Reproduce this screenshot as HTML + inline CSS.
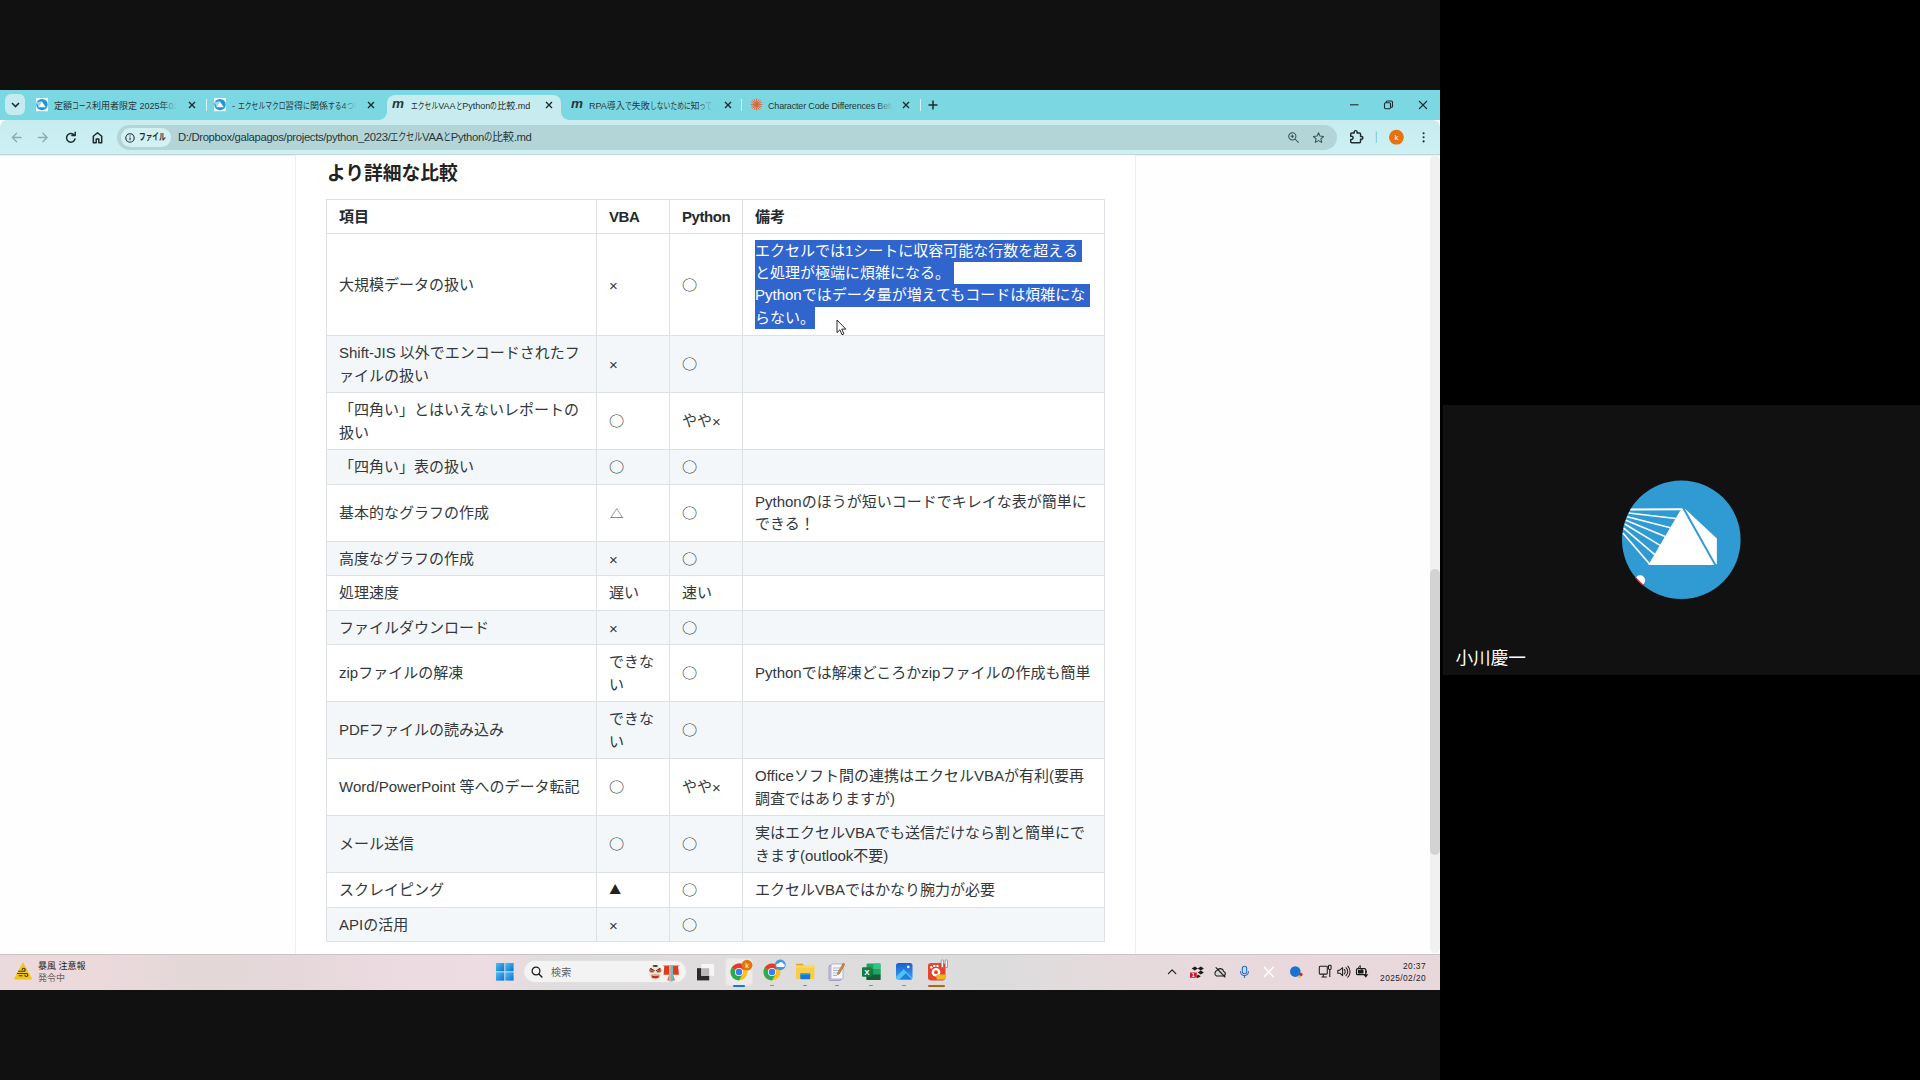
<!DOCTYPE html>
<html lang="ja">
<head>
<meta charset="utf-8">
<title>エクセルVAAとPythonの比較.md</title>
<style>
*{box-sizing:border-box;margin:0;padding:0}
html,body{width:1920px;height:1080px;overflow:hidden;background:#000}
body{position:relative;font-family:"Liberation Sans","Noto Sans CJK JP",sans-serif;color:#222}
#tile{position:absolute;left:0;top:0;width:1440px;height:1080px;background:#111}
#share{position:absolute;left:0;top:90px;width:1440px;height:900px;background:#fff;overflow:hidden}
#tabbar{position:absolute;left:0;top:0;width:1440px;height:30px;background:#7bd8e2}
#toolbar{position:absolute;left:0;top:30px;width:1440px;height:35px;background:linear-gradient(#c7ecf0,#cdf0f3);border-bottom:1px solid #bfd8db;border-radius:7px 7px 0 0}
#page{position:absolute;left:0;top:65px;width:1440px;height:800px;background:#fefefe;box-shadow:inset 0 1px 0 #e3f2f4}
#taskbar{position:absolute;left:0;top:864px;width:1440px;height:36px;background:linear-gradient(90deg,#ebdadd 0%,#ebd9dc 7%,#e3d7d8 14%,#e6d8da 21%,#eddbe2 28%,#eddce2 34%,#dfdddd 38%,#dddcdc 70%,#e6dadc 78%,#e8d9dd 86%,#e8d8dc 100%);box-shadow:inset 0 1px 0 #c9c4c5}
#side{position:absolute;left:1443px;top:405px;width:477px;height:270px;background:#111}
.k{display:inline-block;transform-origin:0 50%;white-space:nowrap}
.ti{position:absolute}
.tt{position:absolute;top:9px;height:14px;line-height:14px;font-size:9px;color:#26373a;white-space:nowrap;overflow:hidden}
.tt::after{content:"";position:absolute;right:0;top:0;width:16px;height:14px;background:linear-gradient(90deg,rgba(123,216,226,0),#7bd8e2)}
.tt.a::after{background:none}
.tx{position:absolute;top:11px;width:8px;height:8px}
.sep{position:absolute;top:9px;width:1px;height:12px;background:#d6f3f6}
#atab{position:absolute;left:387px;top:4.6px;width:174px;height:25.4px;background:#c6ecf0;border-radius:8px 8px 0 0}
#atab:before,#atab:after{content:"";position:absolute;bottom:0;width:8px;height:8px}
#atab:before{left:-8px;background:radial-gradient(circle at 0 0,rgba(0,0,0,0) 7.5px,#c6ecf0 8px)}
#atab:after{right:-8px;background:radial-gradient(circle at 100% 0,rgba(0,0,0,0) 7.5px,#c6ecf0 8px)}
#chev{position:absolute;left:5px;top:4px;width:20px;height:21px;border-radius:6px;background:#c3ebf0}
.fav{position:absolute;top:8px;width:13px;height:13px}
.mfav{position:absolute;top:5px;font-family:"Liberation Sans",sans-serif;font-weight:700;font-style:italic;font-size:13.5px;line-height:18px;color:#27363a;letter-spacing:-1px}
#omni{position:absolute;left:117px;top:4.5px;width:1220px;height:25.5px;border-radius:13px;background:#b4d5d8}
#chip{position:absolute;left:3.5px;top:3.5px;width:50px;height:18.5px;border-radius:9.5px;background:#d3f0f3}
#chip span.l{position:absolute;left:18px;top:0;font-size:9.5px;line-height:18.5px;font-weight:700;color:#1d2c2f;white-space:nowrap}
#url{position:absolute;left:61px;top:0;font-size:11.3px;line-height:25.5px;color:#24383b;white-space:nowrap;letter-spacing:-0.34px}
#content{position:absolute;left:295px;top:0;width:841px;height:800px;background:#fff;border-left:1px solid #eceeef;border-right:1px solid #eceeef}
#h2{position:absolute;left:327px;top:5px;font-size:18.75px;font-weight:700;line-height:28px;color:#222;white-space:nowrap}
table{position:absolute;left:326px;top:44px;width:778px;border-collapse:collapse;table-layout:fixed;font-size:15px;line-height:22.4px;color:#33383c}
td,th{border:1px solid #dde0e4;padding:1px 12px 0;text-align:left;vertical-align:middle;font-weight:400;white-space:nowrap}
th{font-weight:700;color:#24292e}
th.l{letter-spacing:-0.45px}
tr.s td{background:#f4f7f9}
.sel{background:#3065cd;color:#fff;display:block;position:relative;top:-0.7px;height:22.4px;white-space:nowrap}
.sym{font-family:"Noto Sans CJK JP",sans-serif;font-size:15.2px;line-height:15px;position:relative;top:1.2px;left:0px;color:#333;display:inline-block;transform:scaleY(.89)}
.sym.t{font-size:13.4px;top:0.5px;left:1px;transform:scaleY(.85)}
.sym.b{font-size:11.8px;top:0.3px;left:0.3px;color:#222;transform:scaleY(1.04)}
.x{position:relative;top:1px}
#sb{position:absolute;left:1430px;top:0;width:10px;height:798px;background:#f1f1f1;border-radius:5px}
#sbt{position:absolute;left:1430px;top:414px;width:10px;height:286px;background:#d3d3d3;border-radius:5px}
#taskbar{font-family:"Liberation Sans","Noto Sans CJK JP",sans-serif}
#wx1{position:absolute;left:38px;top:6.5px;font-size:9px;line-height:11px;color:#1c1c1c;white-space:nowrap;font-weight:400}
#wx2{position:absolute;left:38px;top:19px;font-size:9px;line-height:11px;color:#6a6466;white-space:nowrap}
#search{position:absolute;left:522.8px;top:6px;width:164.7px;height:23px;border-radius:11.5px;background:#f4f3f3;border:0.5px solid #e2dfdf}
#search span{position:absolute;left:27.2px;top:0.5px;font-size:10px;line-height:21.5px;color:#5f5f5f;letter-spacing:0.3px}
#tbact{position:absolute;left:725px;top:3.5px;width:28px;height:28px;border-radius:4px;background:#ececec;border:0.5px solid #e3e3e3}
.ind{position:absolute;top:30.5px;height:1.6px;width:4px;border-radius:1px;background:#8d8b8b}
#clk{position:absolute;right:14px;top:6px;text-align:right;font-size:8.4px;line-height:12.2px;color:#1c1c1c;white-space:nowrap;letter-spacing:0.4px}
#side{font-family:"Liberation Sans","Noto Sans CJK JP",sans-serif}
#nm{position:absolute;left:12.5px;top:241px;font-size:17.6px;line-height:24px;color:#fff;white-space:nowrap;font-weight:400}
</style>
</head>
<body>
<div id="tile"><div id="share">
<div id="tabbar">
<div id="chev"><svg style="position:absolute;left:6px;top:8px" width="9" height="6" viewBox="0 0 9 6"><path d="M1 1L4.5 4.5L8 1" stroke="#1d2c2f" stroke-width="1.6" fill="none"/></svg></div>
<svg class="fav" style="left:36px;width:12px;height:13.2px;top:8.4px" viewBox="0 0 12 13.2"><rect width="12" height="13.2" fill="#effbfd"/><circle cx="6" cy="6.600" r="5.700" fill="#1f95d6"/><path d="M.6 4.300L5.600 3.300 2.600 9.200z" fill="#9fd4f0"/><path d="M5.800 3.200L2.500 9.200h7.300z" fill="#f4fcff"/></svg><div class="tt" style="left:54px;width:123px">定額<span class="k" style="transform:scaleX(0.755);margin-right:-6.62px">コース</span>利用者限定 2025年02月</div><svg class="tx" style="left:188px" viewBox="0 0 8 8"><path d="M1 1L7 7M7 1L1 7" stroke="#1d2c2f" stroke-width="1.4" fill="none"/></svg><div class="sep" style="left:206px"></div>
<svg class="fav" style="left:214px;width:12px;height:13.2px;top:8.4px" viewBox="0 0 12 13.2"><rect width="12" height="13.2" fill="#effbfd"/><circle cx="6" cy="6.600" r="5.700" fill="#1f95d6"/><path d="M.6 4.300L5.600 3.300 2.600 9.200z" fill="#9fd4f0"/><path d="M5.800 3.200L2.500 9.200h7.300z" fill="#f4fcff"/></svg><div class="tt" style="left:232px;width:125px">- <span class="k" style="transform:scaleX(0.755);margin-right:-15.44px">エクセルマクロ</span>習得<span class="k" style="transform:scaleX(0.755);margin-right:-2.21px">に</span>関係<span class="k" style="transform:scaleX(0.755);margin-right:-4.41px">する</span>4<span class="k" style="transform:scaleX(0.755);margin-right:-8.82px">つのこと</span></div><svg class="tx" style="left:366.5px" viewBox="0 0 8 8"><path d="M1 1L7 7M7 1L1 7" stroke="#1d2c2f" stroke-width="1.4" fill="none"/></svg>
<div id="atab"></div><div class="mfav" style="left:392px">m</div><div class="tt a" style="left:411px;width:125px;color:#1d2c2f"><span class="k" style="transform:scaleX(0.755);margin-right:-8.82px">エクセル</span>VAA<span class="k" style="transform:scaleX(0.755);margin-right:-2.21px">と</span>Python<span class="k" style="transform:scaleX(0.755);margin-right:-2.21px">の</span>比較.md</div><svg class="tx" style="left:544.5px" viewBox="0 0 8 8"><path d="M1 1L7 7M7 1L1 7" stroke="#1d2c2f" stroke-width="1.4" fill="none"/></svg>
<div class="mfav" style="left:571px">m</div><div class="tt" style="left:589px;width:125px">RPA導入<span class="k" style="transform:scaleX(0.755);margin-right:-2.21px">で</span>失敗<span class="k" style="transform:scaleX(0.755);margin-right:-13.23px">しないために</span>知<span class="k" style="transform:scaleX(0.755);margin-right:-8.82px">っておき</span></div><svg class="tx" style="left:723.5px" viewBox="0 0 8 8"><path d="M1 1L7 7M7 1L1 7" stroke="#1d2c2f" stroke-width="1.4" fill="none"/></svg><div class="sep" style="left:741px"></div>
<svg class="fav" style="left:749.5px" viewBox="0 0 13 13"><g stroke="#d9653b" stroke-width="0.9" stroke-linecap="round"><path d="M6.5 1v11M1 6.500h11M2.600 2.600l7.800 7.800M10.400 2.600l-7.800 7.800M4.300 1.600l4.400 9.800M8.700 1.600L4.300 11.400M1.600 4.300l9.800 4.400M1.600 8.700l9.800-4.400"/></g></svg>
<div class="tt" style="left:768px;width:125px;letter-spacing:-0.17px">Character Code Differences Between</div><svg class="tx" style="left:902px" viewBox="0 0 8 8"><path d="M1 1L7 7M7 1L1 7" stroke="#1d2c2f" stroke-width="1.4" fill="none"/></svg><div class="sep" style="left:920px"></div>
<svg class="ti" style="left:928px;top:10px" width="10" height="10" viewBox="0 0 10 10"><path d="M5 .5v9M.5 5h9" stroke="#1d2c2f" stroke-width="1.5"/></svg>
<svg class="ti" style="left:1349px;top:9px" width="80" height="12" viewBox="0 0 80 12"><g stroke="#1d2c2f" stroke-width="1.1" fill="none"><path d="M1 5.800h8.500"/><rect x="35.500" y="3.800" width="6" height="6" rx="1.200"/><path d="M37.300 3.800V3a1 1 0 0 1 1-1h4a1.200 1.200 0 0 1 1.200 1.200v4a1 1 0 0 1-1 1h-.8"/><path d="M70 2l8 8M78 2l-8 8"/></g></svg>
</div>
<div id="toolbar">
<svg class="ti" style="left:11px;top:11px" width="96" height="13" viewBox="0 0 96 13">
<g fill="none" stroke-width="1.35" stroke-linecap="round" stroke-linejoin="round">
<path d="M10 6.500H1.600M5.600 2.200L1.400 6.500l4.200 4.300" stroke="#86aeb4"/>
<path d="M27.500 6.500h8.400M31.900 2.200l4.200 4.300-4.200 4.300" stroke="#86aeb4"/>
<path d="M63.300 4.300A4.300 4.300 0 1 0 64 8" stroke="#1d2c2f" stroke-width="1.5"/><path d="M64.200 1.300v3.300h-3.300" stroke="#1d2c2f" stroke-width="1.5"/>
<path d="M82.300 11.700V5.300l4.200-3.600 4.200 3.600v6.400h-2.900V8h-2.600v3.700z" stroke="#1d2c2f" stroke-width="1.5"/>
</g></svg>
<div id="omni"><div id="chip"><svg style="position:absolute;left:4.5px;top:4.5px" width="10" height="10" viewBox="0 0 10 10"><circle cx="5" cy="5" r="4.200" fill="none" stroke="#1d2c2f" stroke-width="1.100"/><path d="M5 4.400v2.800M5 2.600v1" stroke="#1d2c2f" stroke-width="1.100"/></svg><span class="l"><span class="k" style="transform:scaleX(0.7);margin-right:-11.40px">ファイル</span></span></div>
<div id="url">D:/Dropbox/galapagos/projects/python_2023/<span class="k" style="transform:scaleX(0.73);margin-right:-12.20px">エクセル</span>VAA<span class="k" style="transform:scaleX(0.73);margin-right:-3.05px">と</span>Python<span class="k" style="transform:scaleX(0.73);margin-right:-3.05px">の</span>比較.md</div>
<svg style="position:absolute;left:1170px;top:6px" width="40" height="14" viewBox="0 0 40 14"><g fill="none" stroke="#3c5256" stroke-width="1.050"><circle cx="5.300" cy="5.300" r="3.600"/><path d="M8 8l3.600 3.600M3.600 5.300h3.400M5.300 3.600v3.400"/><path d="M31.500 1.800l1.500 3.300 3.600.4-2.700 2.400.8 3.500-3.200-1.800-3.200 1.800.8-3.500-2.700-2.400 3.600-.4z" stroke-linejoin="round"/></g></svg>
</div>
<svg class="ti" style="left:1349px;top:9px" width="84" height="16" viewBox="0 0 84 16"><path transform="translate(0.540,1.020) scale(0.580)" d="M20.500 11H19V7c0-1.100-.9-2-2-2h-4V3.500C13 2.120 11.880 1 10.500 1S8 2.120 8 3.500V5H4c-1.100 0-1.990.9-1.990 2v3.800H3.500c1.490 0 2.700 1.210 2.700 2.700s-1.210 2.700-2.700 2.700H2V20c0 1.100.9 2 2 2H17c1.100 0 2-.9 2-2v-4h1.500c1.380 0 2.500-1.120 2.500-2.500S21.880 11 20.500 11z" fill="none" stroke="#1d2c2f" stroke-width="2.500" stroke-linejoin="round"/><rect x="26.800" y="2.400" width="1" height="11.500" fill="#74cddb"/><circle cx="47.400" cy="8.200" r="7.400" fill="#e8710a"/><circle cx="74.600" cy="4.300" r="1.050" fill="#1d2c2f"/><circle cx="74.600" cy="8.300" r="1.050" fill="#1d2c2f"/><circle cx="74.600" cy="12.400" r="1.050" fill="#1d2c2f"/><text x="47.400" y="11" font-size="8" font-family="Liberation Sans,sans-serif" fill="#fff" text-anchor="middle">k</text></svg>
</div>
<div id="page"><div id="content"></div><div id="h2">より詳細な比較</div>
<table><colgroup><col style="width:270px"><col style="width:73px"><col style="width:73px"><col style="width:362px"></colgroup>
<tr style="height:34px"><th>項目</th><th class="l">VBA</th><th class="l">Python</th><th>備考</th></tr>
<tr class="" style="height:102px"><td>大規模データの扱い</td><td><span class="x">×</span></td><td><span class="sym">○</span></td><td><span class="sel" style="width:326.6px">エクセルでは1シートに収容可能な行数を超える</span><span class="sel" style="width:199px">と処理が極端に煩雑になる。</span><span class="sel" style="width:335.3px">Pythonではデータ量が増えてもコードは煩雑にな</span><span class="sel" style="width:59.5px">らない。</span></td></tr>
<tr class="s" style="height:57px"><td>Shift-JIS 以外でエンコードされたフ<br>ァイルの扱い</td><td><span class="x">×</span></td><td><span class="sym">○</span></td><td></td></tr>
<tr class="" style="height:57px"><td>「四角い」とはいえないレポートの<br>扱い</td><td><span class="sym">○</span></td><td>やや<span class="x">×</span></td><td></td></tr>
<tr class="s" style="height:35px"><td>「四角い」表の扱い</td><td><span class="sym">○</span></td><td><span class="sym">○</span></td><td></td></tr>
<tr class="" style="height:56.5px"><td>基本的なグラフの作成</td><td><span class="sym t">△</span></td><td><span class="sym">○</span></td><td>Pythonのほうが短いコードでキレイな表が簡単に<br>できる！</td></tr>
<tr class="s" style="height:34.5px"><td>高度なグラフの作成</td><td><span class="x">×</span></td><td><span class="sym">○</span></td><td></td></tr>
<tr class="" style="height:34.5px"><td>処理速度</td><td>遅い</td><td>速い</td><td></td></tr>
<tr class="s" style="height:34.5px"><td>ファイルダウンロード</td><td><span class="x">×</span></td><td><span class="sym">○</span></td><td></td></tr>
<tr class="" style="height:57px"><td>zipファイルの解凍</td><td>できな<br>い</td><td><span class="sym">○</span></td><td>Pythonでは解凍どころかzipファイルの作成も簡単</td></tr>
<tr class="s" style="height:57px"><td>PDFファイルの読み込み</td><td>できな<br>い</td><td><span class="sym">○</span></td><td></td></tr>
<tr class="" style="height:57px"><td>Word/PowerPoint 等へのデータ転記</td><td><span class="sym">○</span></td><td>やや<span class="x">×</span></td><td>Officeソフト間の連携はエクセルVBAが有利(要再<br>調査ではありますが)</td></tr>
<tr class="s" style="height:57px"><td>メール送信</td><td><span class="sym">○</span></td><td><span class="sym">○</span></td><td>実はエクセルVBAでも送信だけなら割と簡単にで<br>きます(outlook不要)</td></tr>
<tr class="" style="height:34.5px"><td>スクレイピング</td><td><span class="sym b">▲</span></td><td><span class="sym">○</span></td><td>エクセルVBAではかなり腕力が必要</td></tr>
<tr class="s" style="height:34.5px"><td>APIの活用</td><td><span class="x">×</span></td><td><span class="sym">○</span></td><td></td></tr>
</table>
<svg class="ti" style="left:835.5px;top:164.4px" width="12" height="18" viewBox="0 0 12 18"><path d="M1 1v12.600l2.900-2.800 2.100 4.900 1.900-.8-2.100-4.800h4z" fill="#fff" stroke="#111" stroke-width="0.9" stroke-linejoin="round"/></svg><div id="sb"></div><div id="sbt"></div></div>
<div id="taskbar">
<svg class="ti" style="left:13px;top:7px" width="20" height="19" viewBox="0 0 20 19"><path d="M10 1.200L18.800 17.300a.8.800 0 0 1-.7 1.200H1.900a.8.800 0 0 1-.7-1.200z" fill="#f0c419"/><g fill="none" stroke="#4a3b0a" stroke-width="1.100" stroke-linecap="round"><path d="M5.500 10.200h5.200a1.500 1.500 0 1 0-1.500-1.500"/><path d="M4.500 12.500h8.800a1.500 1.500 0 1 1-1.500 1.500"/><path d="M6.200 14.800h3"/></g></svg>
<div id="wx1">暴風 注意報</div><div id="wx2">発令中</div>
<svg class="ti" style="left:495.5px;top:9px" width="18" height="18" viewBox="0 0 18 18"><defs><linearGradient id="wg" x1="0" y1="0" x2="1" y2="1"><stop offset="0" stop-color="#4cc2f4"/><stop offset="1" stop-color="#0a6fd0"/></linearGradient></defs><g fill="url(#wg)"><rect x="0" y="0" width="8.300" height="8.300"/><rect x="9.300" y="0" width="8.300" height="8.300"/><rect x="0" y="9.300" width="8.300" height="8.300"/><rect x="9.300" y="9.300" width="8.300" height="8.300"/></g></svg>
<div id="search"><svg style="position:absolute;left:7.700px;top:5px" width="12" height="12" viewBox="0 0 12 12"><circle cx="5" cy="5" r="3.900" fill="none" stroke="#1b1b1b" stroke-width="1.250"/><path d="M7.900 7.900l3 3" stroke="#1b1b1b" stroke-width="1.400" stroke-linecap="round"/></svg><span>検索</span>
<svg style="position:absolute;left:123.7px;top:3px" width="36" height="19" viewBox="0 0 36 19"><ellipse cx="8.300" cy="8.700" rx="6.200" ry="7.600" fill="#ece6cd"/><ellipse cx="8.300" cy="2" rx="2.700" ry=".9" fill="#3b3a2a"/><ellipse cx="3.900" cy="6.300" rx="1.700" ry="2.100" fill="#c23a30" opacity=".8"/><ellipse cx="12.700" cy="6.300" rx="1.700" ry="2.100" fill="#c23a30" opacity=".8"/><path d="M3.800 4.600l3.400 2M12.800 4.600l-3.400 2" stroke="#3a2a22" stroke-width="1.100" stroke-linecap="round"/><path d="M4.300 7.800h2.400M9.900 7.800h2.400" stroke="#2e2420" stroke-width=".9"/><path d="M3.700 10.700q4.600-1.600 9.200 0l-.6 3.200q-4 1.500-8 0z" fill="#e8a79a"/><path d="M4.700 11.600q3.600 1.200 7.200 0l-.5 2q-3.100 1.200-6.200 0z" fill="#b3261c"/>
<rect x="16" y="1.200" width="16.600" height=".9" fill="#b8a470"/><path d="M17.300 2.100h4.900v8.600h-5.600z" fill="#e03a1d"/><path d="M26 2.100h5.100l.8 8.600H26z" fill="#e03a1d"/><path d="M22.200 10.400L20.100 16.400h2.400zM26 10.400l2.100 6h-2.400z" fill="#e66a4a"/><rect x="22.100" y="1.600" width="1.800" height="15.900" fill="#c4a9a3"/><rect x="23.900" y="1.600" width="2.200" height="15.900" fill="#6cbfc0"/></svg></div>
<svg class="ti" style="left:697px;top:9.500px" width="18" height="17" viewBox="0 0 18 17"><rect x="0" y="4.200" width="12.200" height="12.200" fill="#2b2b2b"/><rect x="4.300" y="0" width="12.800" height="11.800" fill="#f6f6f6"/><rect x="4.300" y="4.200" width="7.900" height="7.600" fill="#b9b9b9"/></svg>
<div id="tbact"></div>
<svg class="ti" style="left:729.500px;top:4.500px" width="26" height="27" viewBox="0 0 26 27"><g transform="translate(0.500,4.500)"><circle cx="8.500" cy="8.500" r="8.500" fill="#fbc116"/><path d="M8.500 8.500L1.140 4.250A8.500 8.500 0 0 1 15.860 4.250z" fill="#e33b2e"/><path d="M8.500 0A8.500 8.500 0 0 1 15.860 4.250H8.500z" fill="#e33b2e"/><path d="M1.140 4.250A8.500 8.500 0 0 0 8.500 17L12.200 10.600 8.500 8.500z" fill="#2da94f"/><path d="M1.140 4.250L4.820 10.620 8.500 8.500z" fill="#2da94f"/><circle cx="8.500" cy="8.500" r="4.100" fill="#fff"/><circle cx="8.500" cy="8.500" r="3.250" fill="#3b7ded"/></g><circle cx="17" cy="6.200" r="5.400" fill="#e8710a"/><text x="17" y="8.800" font-size="7.500" font-family="Liberation Sans,sans-serif" fill="#fff" text-anchor="middle">k</text></svg>
<svg class="ti" style="left:762.500px;top:4.500px" width="26" height="27" viewBox="0 0 26 27"><g transform="translate(0.500,4.500)"><circle cx="8.500" cy="8.500" r="8.500" fill="#fbc116"/><path d="M8.500 8.500L1.140 4.250A8.500 8.500 0 0 1 15.860 4.250z" fill="#e33b2e"/><path d="M1.140 4.250A8.500 8.500 0 0 0 8.500 17L12.200 10.600 8.500 8.500z" fill="#2da94f"/><path d="M1.140 4.250L4.820 10.620 8.500 8.500z" fill="#2da94f"/><circle cx="8.500" cy="8.500" r="4.100" fill="#fff"/><circle cx="8.500" cy="8.500" r="3.250" fill="#3b7ded"/></g><circle cx="17.300" cy="5.800" r="5.400" fill="#3a9be0"/><path d="M14.300 7.900h5.900a1.500 1.500 0 0 0 .2-3 2.500 2.500 0 0 0-4.700-.3 1.700 1.700 0 0 0-1.400 3.300z" fill="#fff"/></svg>
<svg class="ti" style="left:795.500px;top:9px" width="19" height="17" viewBox="0 0 19 17"><path d="M0 1.800a1 1 0 0 1 1-1h5.500l1.800 2H0z" fill="#e0a526"/><rect x="0" y="2.600" width="18.500" height="13.600" rx="1" fill="#f9cd45"/><rect x="0" y="2.600" width="18.500" height="2" fill="#fbd766"/><rect x="4.300" y="10.500" width="9.900" height="5.700" rx=".8" fill="#1877cf"/><rect x="4.300" y="10.500" width="9.900" height="1.600" fill="#2f97ea"/></svg>
<svg class="ti" style="left:828px;top:7.500px" width="18" height="20" viewBox="0 0 18 20"><rect x="1" y="3.500" width="12" height="15" rx="1" fill="#c9c6e6" stroke="#8d89b8" stroke-width=".7"/><rect x="3" y="2" width="12" height="15" rx="1" fill="#f7f7fb" stroke="#9d9ac4" stroke-width=".7"/><path d="M5 6h7M5 8.500h7M5 11h5M5 13.500h4" stroke="#a9a9b8" stroke-width=".9"/><path d="M15.200 1.200l1.600 1-5.200 9.300-2 1.300.3-2.400z" fill="#d9902f" stroke="#7a4a18" stroke-width=".5"/></svg>
<svg class="ti" style="left:861.500px;top:8.500px" width="19" height="18" viewBox="0 0 19 18"><rect x="4.500" y="0.500" width="14" height="16.500" rx="1.200" fill="#21a366"/><rect x="11.500" y="0.500" width="7" height="5.500" fill="#33c481"/><rect x="4.500" y="6" width="7" height="5.500" fill="#107c41"/><rect x="11.500" y="6" width="7" height="5.500" fill="#21a366"/><rect x="4.500" y="11.500" width="14" height="5.500" fill="#185c37"/><rect x="0" y="4.200" width="9.600" height="9.600" rx="1" fill="#107c41"/><text x="4.800" y="12" font-size="8" font-weight="700" font-family="Liberation Sans,sans-serif" fill="#fff" text-anchor="middle">X</text></svg>
<svg class="ti" style="left:895.500px;top:9px" width="17" height="17" viewBox="0 0 17 17"><defs><linearGradient id="pg" x1="0" y1="0" x2="0" y2="1"><stop offset="0" stop-color="#1b5fd0"/><stop offset="1" stop-color="#3aa0ee"/></linearGradient></defs><rect width="16.500" height="16.500" rx="2.600" fill="url(#pg)"/><path d="M0 14L7.600 6.200 16.500 15v-1.100A2.600 2.600 0 0 1 13.900 16.500H2.600A2.600 2.600 0 0 1 0 14z" fill="#4cc3f7"/><path d="M3.500 16.500L9.800 10.200 16 16.500z" fill="#1f7fe0"/><circle cx="12.300" cy="3.900" r="1.300" fill="#fff"/></svg>
<svg class="ti" style="left:928px;top:5px" width="22" height="23" viewBox="0 0 22 23"><rect x="0" y="4" width="17.500" height="17.500" rx="3.200" fill="#e4452d"/><circle cx="8" cy="13.200" r="4.300" fill="#fff"/><circle cx="8" cy="13.200" r="1.900" fill="#e4452d"/><circle cx="3.300" cy="8.200" r="1.200" fill="#fff"/><circle cx="6.300" cy="6.900" r="1.200" fill="#fff"/><circle cx="9.500" cy="6.900" r="1.200" fill="#fff"/><rect x="8.500" y="15.500" width="9" height="5" rx=".8" fill="#f3b51c"/><rect x="13.200" y="1" width="2.300" height="7.500" rx=".5" fill="#f6f6f6" stroke="#555" stroke-width=".5"/><rect x="17.200" y="1" width="2.300" height="7.500" rx=".5" fill="#f6f6f6" stroke="#555" stroke-width=".5"/></svg>
<div class="ind" style="left:733px;width:11.500px;background:#1a73d9;height:2px"></div>
<div class="ind" style="left:769.600px"></div><div class="ind" style="left:802.700px"></div><div class="ind" style="left:835.400px"></div><div class="ind" style="left:868.600px"></div><div class="ind" style="left:901.700px"></div>
<div class="ind" style="left:928px;width:16.500px;background:#b2660e;height:2px"></div>
<svg class="ti" style="left:1166px;top:10px" width="206" height="16" viewBox="0 0 206 16">
<path d="M2.400 9.600L6.100 5.800l3.700 3.800" fill="none" stroke="#1c1c1c" stroke-width="1.150" stroke-linecap="round" stroke-linejoin="round"/>
<g fill="#1c1c1c"><path d="M28.800 2.600l3.100 1.900-3.100 1.900-3.100-1.900zM34.800 2.600l3.100 1.900-3.100 1.900-3.100-1.900zM34.800 6.600l3.100 1.900-3.100 1.900-3.100-1.900zM31.800 10.500l3 1.700-3 1.800-1.300-.9z"/></g><rect x="24" y="8.400" width="6.800" height="5.400" rx=".6" fill="#d8122b"/><text x="27.400" y="13.200" font-size="5.500" font-weight="700" font-family="Liberation Sans,sans-serif" fill="#fff" text-anchor="middle">1</text>
<g fill="none" stroke="#1c1c1c" stroke-width="1.100" stroke-linejoin="round"><path d="M50.500 12h6.800a2.300 2.300 0 0 0 .4-4.500 3.600 3.600 0 0 0-6.700-1 3 3 0 0 0-.5 5.500z" fill="#d8d4d4"/><path d="M50 3.700l9 9.300" stroke-linecap="round"/></g>
<g fill="none" stroke="#2a6fcf" stroke-width="1.100" stroke-linecap="round"><rect x="76.300" y="2.200" width="4.400" height="7.600" rx="2.200" fill="#c7dcf3"/><path d="M74.500 7.600a4 4 0 0 0 8 0M78.500 11.600v1.900"/></g>
<path d="M98.500 3.400l8.600 9M107.100 3.400l-8.600 9" stroke="#fff" stroke-width="1.500" stroke-linecap="round"/>
<circle cx="129.300" cy="7.600" r="5.300" fill="#1a73d0"/><circle cx="134.800" cy="10.600" r="1.800" fill="#d42a22"/><rect x="132.200" y="11.600" width="2.300" height="2.300" fill="#edc23a"/>
<g fill="none" stroke="#1c1c1c" stroke-width="1.050" stroke-linejoin="round"><rect x="153.300" y="2.300" width="8" height="7.800" rx=".8"/><path d="M155.500 13h5.300M157.300 10.300V13M163.800 13V5.800"/><rect x="162.500" y="1.200" width="2.600" height="4.200" rx=".9"/>
<path d="M171.800 6.200h2l2.800-2.500v8l-2.800-2.500h-2z"/><path d="M178.300 5.500a3 3 0 0 1 0 4.400M180 3.700a5.500 5.500 0 0 1 0 8M181.800 2.200a7.800 7.800 0 0 1 0 11" stroke-linecap="round"/>
<rect x="190.500" y="4.700" width="9.300" height="6" rx="1.300" stroke-width="1.250"/><path d="M200.300 6.700v2" stroke-width="1.300"/><path d="M192.300 3.300l2-1.800v3.400zM193.300 9.300l3.300-3.100h-1.200l.8-1.300" stroke-width=".9"/></g><path d="M197.300 10.300h5l-2.500 3.400z" fill="#1c1c1c"/><rect x="192" y="6" width="5.500" height="3.500" fill="#1c1c1c"/>
</svg>
<div id="clk">20:37<br>2025/02/20</div>
</div>
</div></div>
<div id="side">
<svg class="ti" style="left:173px;top:70px" width="130" height="130" viewBox="0 0 130 130">
<defs><clipPath id="dot"><circle cx="24.07" cy="105.32" r="6"/></clipPath><clipPath id="av"><circle cx="65.30" cy="64.76" r="59.30"/></clipPath></defs>
<circle cx="65.30" cy="64.76" r="59.30" fill="#309bd2"/>
<g clip-path="url(#av)">
<g stroke="#fff" stroke-linecap="butt"><line x1="14.20" y1="34.55" x2="65.60" y2="34.19" stroke-width="2.05"/><line x1="12.52" y1="38.04" x2="59.82" y2="43.45" stroke-width="1.56"/><line x1="11.19" y1="41.65" x2="54.41" y2="52.72" stroke-width="1.56"/><line x1="9.75" y1="45.26" x2="49.23" y2="61.51" stroke-width="1.56"/><line x1="8.79" y1="48.99" x2="44.06" y2="70.42" stroke-width="1.56"/><line x1="7.70" y1="53.08" x2="38.76" y2="79.69" stroke-width="1.56"/><line x1="6.86" y1="58.02" x2="33.58" y2="89.07" stroke-width="1.69"/></g>
<polygon points="65.96,32.74 32.26,89.92 98.22,89.92" fill="#fff"/>
<polygon points="68.73,33.58 100.87,63.44 100.87,89.31 100.03,89.31" fill="#fff"/>
<circle cx="24.07" cy="105.32" r="5.06" fill="#fff"/>
</g>
<g clip-path="url(#dot)"><circle cx="65.30" cy="64.76" r="59.30" fill="none" stroke="#c83232" stroke-width="1.3"/></g>
</svg>
<div id="nm">小川慶一</div>
</div>
</body>
</html>
